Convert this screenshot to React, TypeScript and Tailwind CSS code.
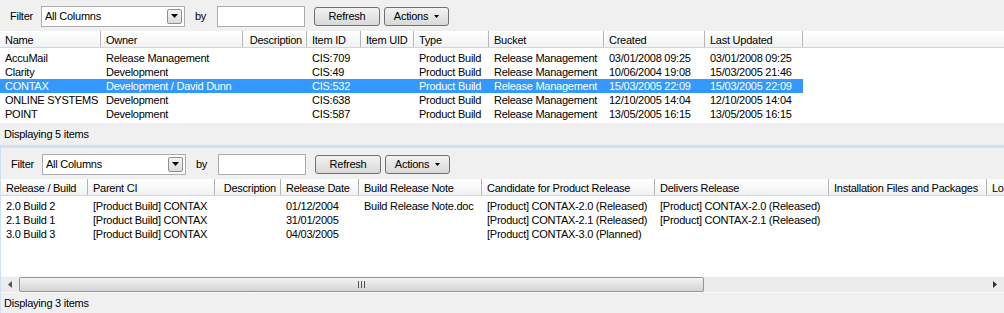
import React from "react";

type Col = { label: string; width: number; right?: boolean };

const topCols: Col[] = [
  { label: "Name", width: 101 },
  { label: "Owner", width: 142 },
  { label: "Description", width: 64, right: true },
  { label: "Item ID", width: 54 },
  { label: "Item UID", width: 53 },
  { label: "Type", width: 75 },
  { label: "Bucket", width: 115 },
  { label: "Created", width: 101 },
  { label: "Last Updated", width: 98 },
];

const topRows = [
  ["AccuMail", "Release Management", "", "CIS:709", "", "Product Build", "Release Management", "03/01/2008 09:25", "03/01/2008 09:25"],
  ["Clarity", "Development", "", "CIS:49", "", "Product Build", "Release Management", "10/06/2004 19:08", "15/03/2005 21:46"],
  ["CONTAX", "Development / David Dunn", "", "CIS:532", "", "Product Build", "Release Management", "15/03/2005 22:09", "15/03/2005 22:09"],
  ["ONLINE SYSTEMS", "Development", "", "CIS:638", "", "Product Build", "Release Management", "12/10/2005 14:04", "12/10/2005 14:04"],
  ["POINT", "Development", "", "CIS:587", "", "Product Build", "Release Management", "13/05/2005 16:15", "13/05/2005 16:15"],
];

const bottomCols: Col[] = [
  { label: "Release / Build", width: 87 },
  { label: "Parent CI", width: 127 },
  { label: "Description", width: 66, right: true },
  { label: "Release Date", width: 78 },
  { label: "Build Release Note", width: 123 },
  { label: "Candidate for Product Release", width: 173 },
  { label: "Delivers Release", width: 174 },
  { label: "Installation Files and Packages", width: 158 },
  { label: "Location", width: 90 },
];

const bottomRows = [
  ["2.0 Build 2", "[Product Build] CONTAX", "", "01/12/2004", "Build Release Note.doc", "[Product] CONTAX-2.0 (Released)", "[Product] CONTAX-2.0 (Released)", "", ""],
  ["2.1 Build 1", "[Product Build] CONTAX", "", "31/01/2005", "", "[Product] CONTAX-2.1 (Released)", "[Product] CONTAX-2.1 (Released)", "", ""],
  ["3.0 Build 3", "[Product Build] CONTAX", "", "04/03/2005", "", "[Product] CONTAX-3.0 (Planned)", "", "", ""],
];

function Toolbar() {
  return (
    <div className="flex items-center h-[31px] pl-[10px] pt-[1px] shrink-0">
      <span className="w-[31px]">Filter</span>
      <div className="flex items-center w-[144px] h-[21px] bg-white border border-[#abadb3] pl-[3px] pr-[2px]">
        <span className="flex-1">All Columns</span>
        <div className="flex items-center justify-center w-[15px] h-[15px] border border-[#8e8f8f] rounded-[2px] bg-gradient-to-b from-[#f5f5f5] to-[#dcdcdc]">
          <svg width="7" height="4" viewBox="0 0 7 4">
            <path d="M0 0h7L3.5 4z" fill="#000" />
          </svg>
        </div>
      </div>
      <span className="ml-[10px] w-[22px]">by</span>
      <div className="w-[88px] h-[21px] bg-white border border-[#abadb3]" />
      <button className="ml-[9px] w-[66px] h-[19px] border border-[#707070] rounded-[3px] bg-gradient-to-b from-[#f2f2f2] to-[#d9d9d9] leading-none">
        Refresh
      </button>
      <button className="ml-[4px] w-[65px] h-[19px] border border-[#707070] rounded-[3px] bg-gradient-to-b from-[#f2f2f2] to-[#d9d9d9] flex items-center justify-center gap-[6px] leading-none">
        <span>Actions</span>
        <svg width="5" height="3" viewBox="0 0 5 3">
          <path d="M0 0h5L2.5 3z" fill="#000" />
        </svg>
      </button>
    </div>
  );
}

function Header({ cols }: { cols: Col[] }) {
  return (
    <div className="flex h-[17px] shrink-0 bg-gradient-to-b from-white to-[#f1f2f4] border-b border-[#d5d5d5]">
      {cols.map((c) => (
        <div
          key={c.label}
          style={{ width: c.width }}
          className={`shrink-0 h-full flex items-center pt-[2px] border-r border-[#b5b5b5] whitespace-nowrap overflow-hidden ${c.right ? "justify-end pr-[4px]" : "pl-[5px]"}`}
        >
          {c.label}
        </div>
      ))}
      <div className="flex-1 min-w-0" />
    </div>
  );
}

function Rows({ cols, rows, selected }: { cols: Col[]; rows: string[][]; selected?: number }) {
  return (
    <div className="flex flex-col pt-[3px]">
      {rows.map((r, i) => (
        <div
          key={i}
          className={`flex h-[14px] shrink-0 w-fit ${i === selected ? "bg-[#3399ff] text-white" : ""}`}
        >
          {cols.map((c, j) => (
            <div
              key={j}
              style={{ width: c.width }}
              className="shrink-0 pl-[5px] whitespace-nowrap overflow-hidden leading-[14px]"
            >
              {r[j]}
            </div>
          ))}
        </div>
      ))}
    </div>
  );
}

export default function App() {
  return (
    <div className="w-[1004px] h-[313px] bg-[#f0f0f0] text-black text-[11px] tracking-[-0.25px] font-['Liberation_Sans',Arial,sans-serif] flex flex-col overflow-hidden">
      {/* top panel */}
      <div className="h-[145px] flex flex-col shrink-0">
        <Toolbar />
        <div className="h-[92px] bg-white flex flex-col overflow-hidden">
          <div className="flex">
            <div className="w-[803px] shrink-0">
              <Header cols={topCols} />
            </div>
            <div className="flex-1 h-[17px] bg-gradient-to-b from-white to-[#f1f2f4] border-b border-[#d5d5d5]" />
          </div>
          <Rows cols={topCols} rows={topRows} selected={2} />
        </div>
        <div className="flex-1 flex items-center pl-[4px]">Displaying 5 items</div>
      </div>

      <div className="h-[3px] bg-[#cfe0f4] shrink-0" />

      {/* bottom panel */}
      <div className="flex-1 flex flex-col border-l-2 border-[#cfe0f4] -ml-[1px]">
        <Toolbar />
        <div className="h-[97px] bg-white flex flex-col overflow-hidden">
          <Header cols={bottomCols} />
          <Rows cols={bottomCols} rows={bottomRows} />
        </div>
        {/* horizontal scrollbar */}
        <div className="h-[17px] flex items-center bg-[#ececec] border-y border-[#f8f8f8] shrink-0">
          <div className="w-[18px] flex justify-center">
            <svg width="4" height="7" viewBox="0 0 4 7">
              <path d="M4 0v7L0 3.5z" fill="#555" />
            </svg>
          </div>
          <div className="w-[685px] h-[15px] border border-[#969696] rounded-[2px] bg-gradient-to-b from-[#f3f3f3] to-[#d4d4d4] flex items-center justify-center">
            <svg width="7" height="7" viewBox="0 0 7 7">
              <path d="M0.5 0v7M3.5 0v7M6.5 0v7" stroke="#555" strokeWidth="1" />
            </svg>
          </div>
          <div className="flex-1" />
          <div className="w-[18px] flex justify-center">
            <svg width="4" height="7" viewBox="0 0 4 7">
              <path d="M0 0v7L4 3.5z" fill="#333" />
            </svg>
          </div>
        </div>
        <div className="flex-1 flex items-center pl-[3px]">Displaying 3 items</div>
      </div>
    </div>
  );
}
